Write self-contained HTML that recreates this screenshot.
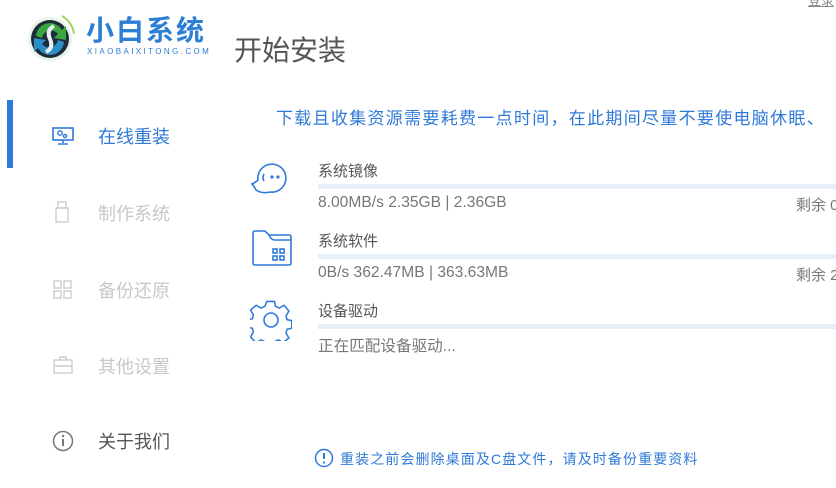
<!DOCTYPE html>
<html><head><meta charset="utf-8"><style>
*{margin:0;padding:0;box-sizing:border-box}
body{width:836px;height:488px;background:#fff;position:relative;overflow:hidden;font-family:"Liberation Sans","Noto Sans CJK SC",sans-serif}
.a{position:absolute;white-space:nowrap}
.nav{font-size:18px;color:#c8c8c8;left:98px}
.bar{position:absolute;left:318px;right:0;height:5px;background:#e6eefa}
.t{font-size:15px;color:#555;left:318px}
.s{font-size:15.6px;color:#777;left:318px}
.r{font-size:15px;color:#777;left:796px}
</style></head><body>
<svg class="a" style="left:26px;top:12px" width="52" height="52" viewBox="0 0 52 52">
<circle cx="24" cy="27" r="22" fill="#e8f4e8"/>
<circle cx="24" cy="27" r="19" fill="#1d2d3a"/>
<path d="M10 24 A14 14 0 0 1 36 18 L40 14 L40 28 L28 26 L32 22 A9 9 0 0 0 16 26Z" fill="#3aa640"/>
<path d="M38 30 A14 14 0 0 1 12 36 L8 40 L8 26 L20 28 L16 32 A9 9 0 0 0 32 28Z" fill="#2a8fc8"/>
<path d="M28 14 Q20 18 24 27 Q28 36 20 40" stroke="#e8eef2" stroke-width="4" fill="none"/>
<path d="M36 4 A24 24 0 0 1 48 22" stroke="#9dd46a" stroke-width="2" fill="none"/>
</svg>
<div class="a" style="left:86px;top:9px;font-size:28px;color:#2d7fd4;font-weight:bold;letter-spacing:2px">小白系统</div>
<div class="a" style="left:87px;top:47px;font-size:8px;color:#2d7fd4;letter-spacing:2.4px">XIAOBAIXITONG.COM</div>
<div class="a" style="left:234px;top:29px;font-size:28px;color:#555">开始安装</div>
<div class="a" style="left:808px;top:-10px;font-size:13px;color:#888;text-decoration:underline">登录</div>
<div class="a" style="left:7px;top:100px;width:6px;height:68px;background:#2f7ad8"></div>
<svg class="a" style="left:52px;top:127px" width="22" height="18" viewBox="0 0 22 18"><rect x="1" y="1" width="20" height="12" fill="none" stroke="#2f7ad8" stroke-width="1.6"/><circle cx="8" cy="6" r="2.2" fill="none" stroke="#2f7ad8" stroke-width="1.4"/><circle cx="13" cy="9" r="1.6" fill="none" stroke="#2f7ad8" stroke-width="1.4"/><path d="M11 13v3M6 17h10" stroke="#2f7ad8" stroke-width="1.6"/></svg>
<div class="a nav" style="top:123px;color:#2f7ad8">在线重装</div>
<svg class="a" style="left:55px;top:201px" width="14" height="22" viewBox="0 0 14 22"><rect x="3" y="1" width="8" height="6" fill="none" stroke="#ccc" stroke-width="1.4"/><rect x="1" y="7" width="12" height="14" fill="none" stroke="#ccc" stroke-width="1.4"/></svg>
<div class="a nav" style="top:200px">制作系统</div>
<svg class="a" style="left:53px;top:280px" width="20" height="20" viewBox="0 0 20 20" fill="none" stroke="#ccc" stroke-width="1.4"><rect x="1" y="1" width="7" height="7"/><rect x="11" y="1" width="7" height="7"/><rect x="1" y="11" width="7" height="7"/><rect x="11" y="11" width="7" height="7"/></svg>
<div class="a nav" style="top:277px">备份还原</div>
<svg class="a" style="left:53px;top:356px" width="20" height="18" viewBox="0 0 20 18" fill="none" stroke="#ccc" stroke-width="1.4"><rect x="1" y="4" width="18" height="13"/><path d="M7 4V1h6v3M1 10h18"/></svg>
<div class="a nav" style="top:353px">其他设置</div>
<svg class="a" style="left:52px;top:430px" width="22" height="22" viewBox="0 0 22 22"><circle cx="11" cy="11" r="9.5" fill="none" stroke="#777" stroke-width="1.5"/><path d="M11 9v7" stroke="#777" stroke-width="2"/><circle cx="11" cy="6" r="1.2" fill="#777"/></svg>
<div class="a nav" style="top:428px;color:#555">关于我们</div>
<div class="a" style="left:276px;top:104px;font-size:17px;color:#2f7ad8;letter-spacing:1.3px">下载且收集资源需要耗费一点时间，在此期间尽量不要使电脑休眠、</div>
<svg class="a" style="left:250px;top:160px" width="44" height="36" viewBox="0 0 44 36" fill="none" stroke="#2f7ad8" stroke-width="1.6"><path d="M8 20 A14 14 0 1 1 20 32 Q12 34 6 30 Q4 26 2 24 Q6 22 8 20Z"/><path d="M14 14 Q12 18 14 21" /><circle cx="22" cy="17" r="0.8" fill="#2f7ad8"/><circle cx="28" cy="17" r="0.8" fill="#2f7ad8"/></svg>
<div class="a t" style="top:160px">系统镜像</div>
<div class="bar" style="top:184px"></div>
<div class="a s" style="top:194px">8.00MB/s 2.35GB | 2.36GB</div>
<div class="a r" style="top:194px">剩余 0</div>
<svg class="a" style="left:251px;top:230px" width="42" height="36" viewBox="0 0 42 36" fill="none" stroke="#2f7ad8" stroke-width="1.6"><path d="M2 3 Q2 1 4 1 H14 L18 5 H38 Q40 5 40 7 V33 Q40 35 38 35 H4 Q2 35 2 33Z"/><path d="M18 5 Q20 10 24 10 H40"/><rect x="22" y="19" width="4" height="4"/><rect x="29" y="19" width="4" height="4"/><rect x="22" y="26" width="4" height="4"/><rect x="29" y="26" width="4" height="4"/></svg>
<div class="a t" style="top:230px">系统软件</div>
<div class="bar" style="top:254px"></div>
<div class="a s" style="top:264px">0B/s 362.47MB | 363.63MB</div>
<div class="a r" style="top:264px">剩余 2</div>
<svg class="a" style="left:250px;top:299px" width="42" height="42" viewBox="0 0 42 42" fill="none" stroke="#2f7ad8" stroke-width="1.6"><path d="M17 2h8l1 5 4 2 5-3 5 6-3 5 1 4 5 1v8l-5 1-1 4 3 5-6 5-5-3-4 2-1 5h-8l-1-5-4-2-5 3-6-6 3-5-1-4-5-1v-8l5-1 1-4-3-5 6-5 5 3 4-2z" transform="translate(0.5,0.5) scale(0.96)"/><circle cx="21" cy="21" r="7"/></svg>
<div class="a t" style="top:300px">设备驱动</div>
<div class="bar" style="top:324px"></div>
<div class="a s" style="top:334px">正在匹配设备驱动...</div>
<svg class="a" style="left:314px;top:448px" width="20" height="20" viewBox="0 0 20 20"><circle cx="10" cy="10" r="8.5" fill="none" stroke="#2f7ad8" stroke-width="1.5"/><path d="M10 5v6" stroke="#2f7ad8" stroke-width="2"/><circle cx="10" cy="14.5" r="1.1" fill="#2f7ad8"/></svg>
<div class="a" style="left:340px;top:449px;font-size:14px;color:#2f7ad8;letter-spacing:1.1px">重装之前会删除桌面及C盘文件，请及时备份重要资料</div>
</body></html>
